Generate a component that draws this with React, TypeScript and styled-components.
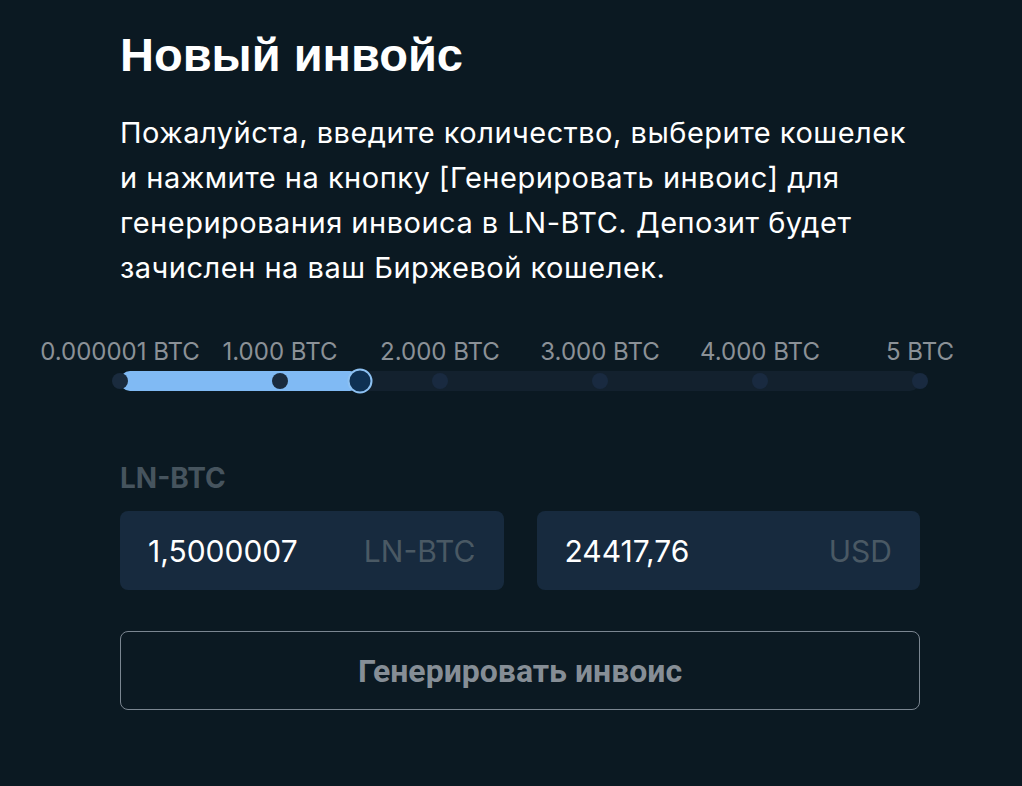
import React from 'react';
import styled, { createGlobalStyle } from 'styled-components';

const GlobalStyle = createGlobalStyle`
  html, body {
    margin: 0;
    padding: 0;
    background: #0b1922;
  }
  body {
    font-family: Inter, "Noto Sans", sans-serif;
  }
`;

const MARKS = [
  { label: '0.000001 BTC', pos: 0 },
  { label: '1.000 BTC', pos: 0.2 },
  { label: '2.000 BTC', pos: 0.4 },
  { label: '3.000 BTC', pos: 0.6 },
  { label: '4.000 BTC', pos: 0.8 },
  { label: '5 BTC', pos: 1 },
];

const VALUE = 0.3;

const App = (): JSX.Element => {
  return (
    <Page>
      <GlobalStyle />
      <Panel>
        <Title>Новый инвойс</Title>
        <Description>
          Пожалуйста, введите количество, выберите кошелек и нажмите на кнопку
          [Генерировать инвоис] для генерирования инвоиса в LN-BTC. Депозит
          будет зачислен на ваш Биржевой кошелек.
        </Description>
        <Slider>
          <Labels>
            {MARKS.map((m) => (
              <MarkLabel key={m.label} style={{ left: `${m.pos * 100}%` }}>
                {m.label}
              </MarkLabel>
            ))}
          </Labels>
          <Track>
            <Fill style={{ width: `${VALUE * 100}%` }} />
            {MARKS.map((m) => (
              <Dot key={m.label} $active={m.pos <= VALUE} style={{ left: `${m.pos * 100}%` }} />
            ))}
            <Thumb style={{ left: `${VALUE * 100}%` }} />
          </Track>
        </Slider>
        <FieldLabel>LN-BTC</FieldLabel>
        <InputRow>
          <InputBox>
            <Value>1,5000007</Value>
            <Unit>LN-BTC</Unit>
          </InputBox>
          <InputBox>
            <Value>24417,76</Value>
            <Unit>USD</Unit>
          </InputBox>
        </InputRow>
        <GenerateButton type="button">Генерировать инвоис</GenerateButton>
      </Panel>
    </Page>
  );
};

export default App;

const Page = styled.div`
  min-height: 786px;
  background: #0b1922;
  padding: 27px 0 0 120px;
  box-sizing: border-box;
`;

const Panel = styled.div`
  width: 800px;
  display: flex;
  flex-direction: column;
`;

const Title = styled.h1`
  margin: 0;
  font-family: "Liberation Sans", Arial, sans-serif;
  font-weight: 700;
  font-size: 47px;
  line-height: 56px;
  color: #ffffff;
`;

const Description = styled.p`
  margin: 27px 0 0;
  width: 800px;
  font-size: 29px;
  letter-spacing: 0.5px;
  line-height: 45px;
  color: #ffffff;
`;

const Slider = styled.div`
  margin-top: 48px;
  display: flex;
  flex-direction: column;
  gap: 5px;
`;

const Labels = styled.div`
  position: relative;
  height: 28px;
`;

const MarkLabel = styled.span`
  position: absolute;
  top: 0;
  transform: translateX(-50%);
  white-space: nowrap;
  font-size: 24px;
  line-height: 28px;
  color: #8b9197;
`;

const Track = styled.div`
  position: relative;
  height: 20px;
  border-radius: 10px;
  background: #13212e;
`;

const Fill = styled.div`
  position: absolute;
  left: 0;
  top: 0;
  bottom: 0;
  border-radius: 10px;
  background: #80baf4;
`;

const Dot = styled.span<{ $active: boolean }>`
  position: absolute;
  top: 50%;
  width: 16px;
  height: 16px;
  border-radius: 50%;
  transform: translate(-50%, -50%);
  background: ${(p) => (p.$active ? '#1a2b3e' : '#192a40')};
`;

const Thumb = styled.span`
  position: absolute;
  top: 50%;
  width: 21px;
  height: 21px;
  border-radius: 50%;
  transform: translate(-50%, -50%);
  background: #0f3153;
  border: 2px solid #8dc1f2;
`;

const FieldLabel = styled.div`
  margin-top: 70px;
  font-size: 28px;
  font-weight: 700;
  line-height: 34px;
  color: #46545e;
`;

const InputRow = styled.div`
  margin-top: 16px;
  display: grid;
  grid-template-columns: 1fr 1fr;
  gap: 33px;
`;

const InputBox = styled.div`
  height: 79px;
  border-radius: 8px;
  background: #172a3e;
  display: flex;
  align-items: center;
  justify-content: space-between;
  padding: 0 28px;
`;

const Value = styled.span`
  font-size: 30px;
  color: #ffffff;
`;

const Unit = styled.span`
  font-size: 30px;
  color: #4a5964;
`;

const GenerateButton = styled.button`
  margin-top: 41px;
  height: 79px;
  width: 100%;
  border: 1px solid #7b8691;
  border-radius: 8px;
  background: transparent;
  font-family: Roboto, "Noto Sans", sans-serif;
  font-weight: 700;
  font-size: 32px;
  color: #868e96;
  cursor: pointer;
`;
